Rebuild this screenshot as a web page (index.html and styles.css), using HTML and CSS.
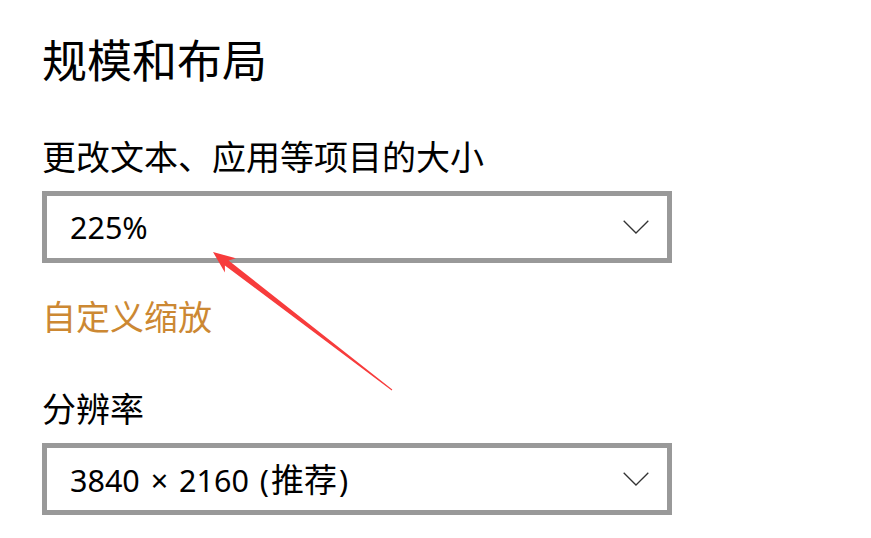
FILE: index.html
```html
<!DOCTYPE html>
<html lang="zh-CN">
<head>
<meta charset="utf-8">
<link rel="stylesheet" href="styles.css">
</head>
<body>
<main class="page">
  <h1 class="title">规模和布局</h1>
  <div class="label">更改文本、应用等项目的大小</div>
  <div class="select">
    <span class="value">225%</span>
    <svg class="chev" width="26" height="14" viewBox="0 0 26 14"><path d="M0.7 0.7 L13 13 L25.3 0.7" fill="none" stroke="#333" stroke-width="1.3"/></svg>
  </div>
  <a class="link">自定义缩放</a>
  <div class="label label-res">分辨率</div>
  <div class="select">
    <span class="value value-wide">3840 × 2160 (<span class="cjk">推荐</span>)</span>
    <svg class="chev" width="26" height="14" viewBox="0 0 26 14"><path d="M0.7 0.7 L13 13 L25.3 0.7" fill="none" stroke="#333" stroke-width="1.3"/></svg>
  </div>
</main>
<svg class="arrow" width="871" height="538" viewBox="0 0 871 538">
  <polygon fill="#f73c3c" points="213,252 235.9,258.3 228.6,260.4 392.3,389.6 391.7,390.4 224.9,265.4 224.9,272.5"/>
</svg>
</body>
</html>
```

FILE: styles.css
```css
html, body {
  margin: 0;
  padding: 0;
  background: #fff;
}
body {
  font-family: "Noto Sans", "Noto Sans CJK SC", sans-serif;
  color: #000;
  width: 871px;
  height: 538px;
  overflow: hidden;
  position: relative;
}
.page {
  display: flex;
  flex-direction: column;
  align-items: flex-start;
  padding-left: 42px;
}
.title {
  margin: 29px 0 0 0;
  font-size: 45px;
  font-weight: 400;
  line-height: 60px;
  font-family: "Noto Sans CJK SC", sans-serif;
}
.label {
  margin-top: 47px;
  font-size: 34px;
  line-height: 40px;
  font-family: "Noto Sans CJK SC", sans-serif;
}
.label-res {
  margin-top: 52px;
}
.select {
  box-sizing: border-box;
  margin-top: 15px;
  width: 630px;
  height: 72px;
  border: 5px solid #999;
  display: flex;
  align-items: center;
  justify-content: space-between;
  padding: 0 18px 0 23px;
}
.value {
  font-size: 30.5px;
  line-height: 40px;
  font-family: "Noto Sans", "Noto Sans CJK SC", sans-serif;
}
.value-wide {
  word-spacing: 3px;
}
.cjk {
  font-size: 33px;
  font-family: "Noto Sans CJK SC", sans-serif;
  margin: 0 2px;
}
.chev {
  display: block;
}
.link {
  margin-top: 33px;
  font-size: 34px;
  line-height: 40px;
  color: #cc8833;
  font-family: "Noto Sans CJK SC", sans-serif;
}
.arrow {
  position: absolute;
  left: 0;
  top: 0;
  pointer-events: none;
}
```
